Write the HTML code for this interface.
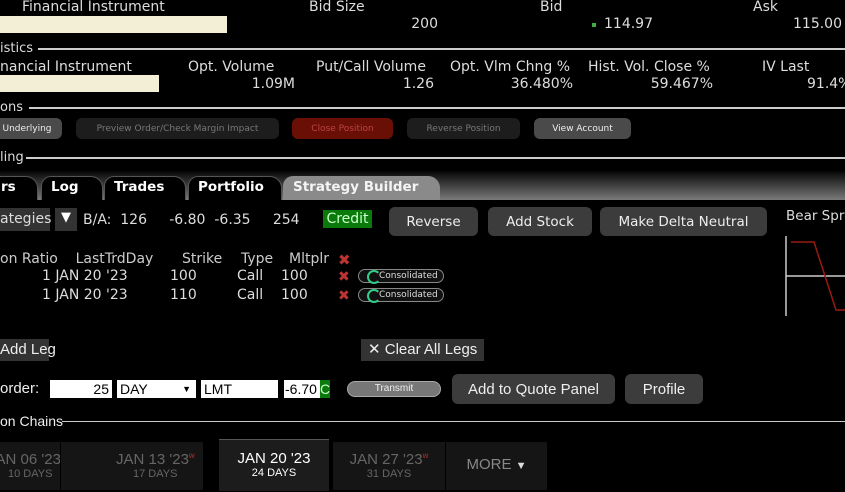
<!DOCTYPE html>
<html><head><meta charset="utf-8"><style>
*{margin:0;padding:0;box-sizing:border-box}
body{width:845px;height:492px;background:#000;color:#ddd;font-family:"DejaVu Sans","Liberation Sans",sans-serif;font-size:13px;position:relative;overflow:hidden}
.a{position:absolute;white-space:nowrap}
.n{font-family:"Liberation Sans Narrow","Liberation Sans",sans-serif}
.ln{position:absolute;height:2px;background:#ccc;right:0}
.btn{position:absolute;border-radius:6px;font-size:9px;display:flex;align-items:center;justify-content:center;white-space:nowrap}
.b2{position:absolute;border-radius:6px;background:#3c3c3c;color:#eee;font-size:13.5px;display:flex;align-items:center;justify-content:center}
.tab{position:absolute;top:176px;height:24px;border:1px solid #555;border-bottom:none;border-radius:10px 12px 0 0;background:#000;color:#fff;font-weight:bold;font-size:13.5px;padding:2px 0 0 9px}
.inp{position:absolute;top:380px;height:18px;background:#fff;color:#000;font-size:14px;padding:0 3px;line-height:18px}
.dt{position:absolute;top:442px;height:48px;background:#151515;color:#666;text-align:center;white-space:nowrap;overflow:hidden;font-family:"Liberation Sans Narrow","Liberation Sans",sans-serif}
.dt b{display:block;font-weight:normal;font-size:15px;margin-top:9px}
.dt i{display:block;font-style:normal;font-size:11px}
sup{color:#a33;font-size:8px}
.cons{position:absolute;left:358px;width:86px;height:14px;border:1px solid #888;border-radius:7px;background:#111;font-size:9px;color:#ddd;padding-left:20px;line-height:12px}
.cons::before{content:"";position:absolute;left:8px;top:0;width:10px;height:10px;border:2px solid #3c8;border-radius:50%;border-right-color:transparent}
.x{position:absolute;color:#b33;font-weight:bold;font-size:14px}
</style></head><body>
<div class="a" style="left:22px;top:-1px;font-size:14px">Financial Instrument</div>
<div class="a" style="left:309px;top:-1px;font-size:14px">Bid Size</div>
<div class="a" style="left:540px;top:-1px;font-size:14px">Bid</div>
<div class="a" style="left:753px;top:-1px;font-size:14px">Ask</div>
<div class="a" style="left:0;top:16px;width:227px;height:17px;background:#f2efd6"></div>
<div class="a" style="right:407px;top:16px;font-size:14px">200</div>
<div class="a" style="left:592px;top:23px;width:4px;height:4px;background:#4a4"></div>
<div class="a" style="left:604px;top:16px;font-size:14px">114.97</div>
<div class="a" style="left:793px;top:16px;font-size:14px">115.00</div>

<div class="a" style="left:0;top:41px;font-size:13px">istics</div><div class="ln" style="left:38px;top:48px"></div>
<div class="a" style="left:0;top:59px;font-size:14px">nancial Instrument</div>
<div class="a" style="left:188px;top:59px;font-size:14px">Opt. Volume</div>
<div class="a" style="left:316px;top:59px;font-size:14px">Put/Call Volume</div>
<div class="a" style="left:450px;top:59px;font-size:14px">Opt. Vlm Chng %</div>
<div class="a" style="left:588px;top:59px;font-size:14px">Hist. Vol. Close %</div>
<div class="a" style="left:762px;top:59px;font-size:14px">IV Last</div>
<div class="a" style="left:0;top:75px;width:159px;height:17px;background:#f2efd6"></div>
<div class="a" style="right:550px;top:76px;font-size:14px">1.09M</div>
<div class="a" style="right:411px;top:76px;font-size:14px">1.26</div>
<div class="a" style="right:272px;top:76px;font-size:14px">36.480%</div>
<div class="a" style="right:132px;top:76px;font-size:14px">59.467%</div>
<div class="a" style="left:807px;top:76px;font-size:14px">91.4%</div>

<div class="a" style="left:0;top:100px">ons</div><div class="ln" style="left:29px;top:107px"></div>
<div class="btn" style="left:-8px;top:118px;width:70px;height:21px;background:#4a4a4a;color:#eee">Underlying</div>
<div class="btn" style="left:76px;top:118px;width:203px;height:21px;background:#1d1d1d;color:#777">Preview Order/Check Margin Impact</div>
<div class="btn" style="left:292px;top:118px;width:101px;height:21px;background:#6a0f05;color:#b44">Close Position</div>
<div class="btn" style="left:407px;top:118px;width:113px;height:21px;background:#1d1d1d;color:#777">Reverse Position</div>
<div class="btn" style="left:534px;top:118px;width:97px;height:21px;background:#4a4a4a;color:#eee">View Account</div>

<div class="a" style="left:0;top:150px">ling</div><div class="ln" style="left:26px;top:157px"></div>
<div class="a" style="left:0;top:170px;width:845px;height:30px;background:linear-gradient(#000,#1a1a1a 20%,#7a7a7a)"></div>
<div class="tab" style="left:-20px;width:58px;padding-left:20px">rs</div>
<div class="tab" style="left:41px;width:62px">Log</div>
<div class="tab" style="left:104px;width:82px">Trades</div>
<div class="tab" style="left:188px;width:94px">Portfolio</div>
<div class="tab" style="left:283px;width:157px;background:#8a8a8a;border-color:#8a8a8a;color:#f4f4f4">Strategy Builder</div>

<div class="a" style="left:0;top:208px;width:50px;height:23px;background:#333;font-size:14px;padding:3px 0 0 0">ategies</div>
<div class="a" style="left:55px;top:208px;width:22px;height:23px;background:#333;color:#fff;font-size:13px;text-align:center;padding-top:2px">▼</div>
<div class="a" style="left:83px;top:212px;font-size:14px">B/A:&nbsp; 126&nbsp;&nbsp;&nbsp;&nbsp; -6.80&nbsp; -6.35&nbsp;&nbsp;&nbsp;&nbsp; 254</div>
<div class="a" style="left:323px;top:210px;width:49px;height:18px;background:#0a7a0a;color:#cfc;font-size:14px;text-align:center;line-height:18px">Credit</div>
<div class="b2" style="left:389px;top:207px;width:89px;height:29px">Reverse</div>
<div class="b2" style="left:488px;top:207px;width:104px;height:29px">Add Stock</div>
<div class="b2" style="left:600px;top:207px;width:167px;height:29px">Make Delta Neutral</div>
<div class="a" style="left:786px;top:208px;font-size:13.5px">Bear Spre</div>
<svg class="a" style="left:780px;top:230px" width="65" height="90"><path d="M6 6V86M6 46H65" stroke="#ccc" stroke-width="1.5" fill="none"/><path d="M11 12H34L56 80H65" stroke="#9a1a10" stroke-width="1.5" fill="none"/></svg>

<div class="a" style="left:0;top:251px;font-size:14px;color:#ccc">on Ratio&nbsp;&nbsp;&nbsp; LastTrdDay</div>
<div class="a" style="left:182px;top:251px;font-size:14px;color:#ccc">Strike</div>
<div class="a" style="left:241px;top:251px;font-size:14px;color:#ccc">Type</div>
<div class="a" style="left:289px;top:251px;font-size:14px;color:#ccc">Mltplr</div>
<div class="x" style="left:338px;top:251px;font-size:15px">✖</div>
<div class="a" style="left:42px;top:268px;font-size:14px">1 JAN 20 '23</div>
<div class="a" style="left:170px;top:268px;font-size:14px">100</div>
<div class="a" style="left:237px;top:268px;font-size:14px">Call</div>
<div class="a" style="left:281px;top:268px;font-size:14px">100</div>
<div class="x" style="left:338px;top:269px">✖</div>
<div class="cons" style="top:269px">Consolidated</div>
<div class="a" style="left:42px;top:287px;font-size:14px">1 JAN 20 '23</div>
<div class="a" style="left:170px;top:287px;font-size:14px">110</div>
<div class="a" style="left:237px;top:287px;font-size:14px">Call</div>
<div class="a" style="left:281px;top:287px;font-size:14px">100</div>
<div class="x" style="left:338px;top:288px">✖</div>
<div class="cons" style="top:288px">Consolidated</div>

<div class="a n" style="left:0;top:339px;width:49px;height:22px;background:#333;color:#eee;font-size:15px;line-height:22px">Add Leg</div>
<div class="a n" style="left:361px;top:339px;width:123px;height:22px;background:#333;color:#eee;font-size:15px;line-height:22px;padding-left:7px">✕ Clear All Legs</div>

<div class="a n" style="left:0;top:380px;font-size:15px;color:#eee">order:</div>
<div class="inp n" style="left:50px;width:62px;text-align:right">25</div>
<div class="inp n" style="left:117px;width:79px">DAY<span style="position:absolute;right:5px;font-size:9px">▼</span></div>
<div class="inp n" style="left:201px;width:77px">LMT</div>
<div class="inp n" style="left:284px;width:36px;padding:0 1px">-6.70</div>
<div class="a n" style="left:320px;top:380px;width:10px;height:18px;background:#0a7a0a;color:#cfc;font-size:14px;line-height:18px">C</div>
<div class="a n" style="left:347px;top:381px;width:94px;height:16px;border-radius:8px;background:#777;border:1px solid #aaa;color:#eee;font-size:10px;text-align:center;line-height:14px">Transmit</div>
<div class="b2 n" style="left:452px;top:374px;width:163px;height:30px;font-size:15px">Add to Quote Panel</div>
<div class="b2 n" style="left:625px;top:374px;width:78px;height:30px;font-size:15px">Profile</div>

<div class="a n" style="left:0;top:413px;font-size:14px;color:#eee">on Chains</div><div class="ln" style="left:62px;top:421px;height:1px"></div>
<div class="dt" style="left:0;width:60px;text-align:left"><b style="margin-left:-12px">JAN 06 '23<sup>w</sup></b><i style="margin-left:8px">10 DAYS</i></div>
<div class="dt" style="left:61px;width:142px;text-align:left"><b style="margin-left:55px">JAN 13 '23<sup>w</sup></b><i style="margin-left:72px">17 DAYS</i></div>
<div class="dt" style="left:219px;width:110px;top:439px;height:52px;background:#1c1c1c;border-top:1px solid #555;color:#fff"><b style="margin-top:10px">JAN 20 '23</b><i>24 DAYS</i></div>
<div class="dt" style="left:333px;width:112px"><b>JAN 27 '23<sup>w</sup></b><i>31 DAYS</i></div>
<div class="dt" style="left:446px;width:101px;color:#888"><b style="margin-top:14px">MORE <span style="font-size:11px;color:#ddd">▼</span></b></div>
</body></html>
